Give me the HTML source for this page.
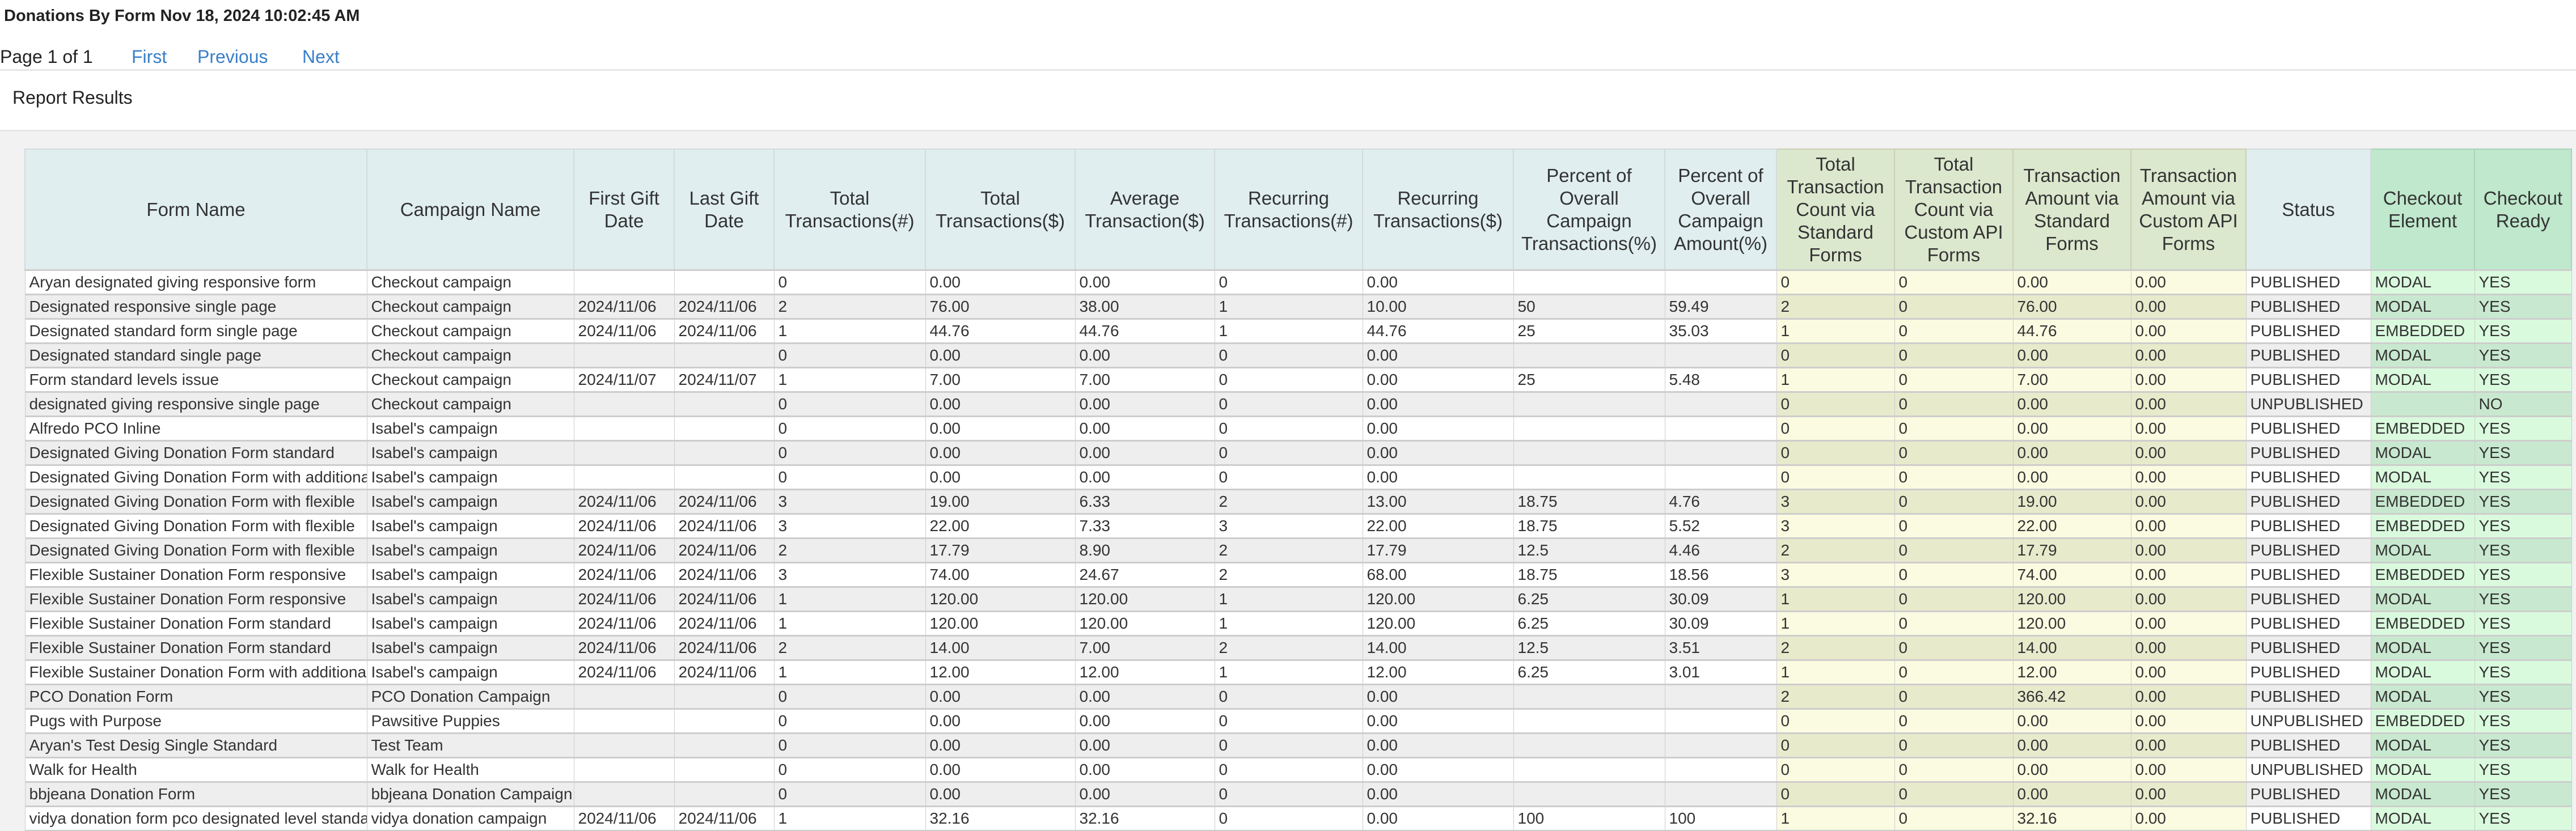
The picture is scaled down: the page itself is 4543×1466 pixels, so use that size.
<!DOCTYPE html>
<html><head><meta charset="utf-8">
<style>
html,body{margin:0;padding:0;background:#fff;width:4543px;height:1466px;overflow:hidden;font-family:"Liberation Sans",sans-serif;color:#222}
.title{position:absolute;left:7px;top:12px;font-size:29px;font-weight:bold}
.pager{position:absolute;left:0;top:82px;font-size:32px}
.pager a{color:#3a7fc8;text-decoration:none;position:absolute;top:0;white-space:nowrap}
.line{position:absolute;left:0;right:0;top:122px;height:3px;background:#e6e6e6}
.rr{position:absolute;left:22px;top:154px;font-size:32px}
.band{position:absolute;left:0;right:0;top:229px;bottom:0;background:#f2f2f2;border-top:3px solid #e6e6e6}
table{position:absolute;left:43px;top:262px;border-collapse:collapse;table-layout:fixed;width:4491px}
th,td{border:2px solid #cfcfcf;overflow:hidden;white-space:nowrap}
th{height:211px;font-weight:normal;font-size:33px;line-height:40px;white-space:normal;background:#e0eef0;color:#333;padding:0 2px;border-color:#d2dadb}
td{height:40px;font-size:28px;padding:0 0 0 7px;color:#333;background:#fff;border-left-width:1px;border-right-width:1px;border-top-width:3px;border-color:#cdcdcd}
tr.g td{background:#eeeeee}
th.y{background:#dce8ce;border-color:#c9cfb5}
th.e{background:#bfe8cc;border-color:#aad2b8}
td.y{background:#fafbe0}
tr.g td.y{background:#e8eacc}
td.e{background:#dafade}
tr.g td.e{background:#c8e9cf}
</style></head><body>
<div class="title">Donations By Form Nov 18, 2024 10:02:45 AM</div>
<div class="pager"><span>Page 1 of 1</span><a style="left:232px">First</a><a style="left:348px">Previous</a><a style="left:533px">Next</a></div>
<div class="line"></div>
<div class="rr">Report Results</div>
<div class="band"></div>
<table>
<colgroup>
<col style="width:603px"><col style="width:365px"><col style="width:177px"><col style="width:176px"><col style="width:267px"><col style="width:264px"><col style="width:246px"><col style="width:261px"><col style="width:266px"><col style="width:267px"><col style="width:197px"><col style="width:208px"><col style="width:209px"><col style="width:208px"><col style="width:203px"><col style="width:220px"><col style="width:183px"><col style="width:171px">
</colgroup>
<tr><th>Form Name</th><th>Campaign Name</th><th>First Gift Date</th><th>Last Gift Date</th><th>Total Transactions(#)</th><th>Total Transactions($)</th><th>Average Transaction($)</th><th>Recurring Transactions(#)</th><th>Recurring Transactions($)</th><th>Percent of Overall Campaign Transactions(%)</th><th>Percent of Overall Campaign Amount(%)</th><th class="y">Total Transaction Count via Standard Forms</th><th class="y">Total Transaction Count via Custom API Forms</th><th class="y">Transaction Amount via Standard Forms</th><th class="y">Transaction Amount via Custom API Forms</th><th>Status</th><th class="e">Checkout Element</th><th class="e">Checkout Ready</th></tr>
<tr><td>Aryan designated giving responsive form</td><td>Checkout campaign</td><td></td><td></td><td>0</td><td>0.00</td><td>0.00</td><td>0</td><td>0.00</td><td></td><td></td><td class="y">0</td><td class="y">0</td><td class="y">0.00</td><td class="y">0.00</td><td>PUBLISHED</td><td class="e">MODAL</td><td class="e">YES</td></tr>
<tr class="g"><td>Designated responsive single page</td><td>Checkout campaign</td><td>2024/11/06</td><td>2024/11/06</td><td>2</td><td>76.00</td><td>38.00</td><td>1</td><td>10.00</td><td>50</td><td>59.49</td><td class="y">2</td><td class="y">0</td><td class="y">76.00</td><td class="y">0.00</td><td>PUBLISHED</td><td class="e">MODAL</td><td class="e">YES</td></tr>
<tr><td>Designated standard form single page</td><td>Checkout campaign</td><td>2024/11/06</td><td>2024/11/06</td><td>1</td><td>44.76</td><td>44.76</td><td>1</td><td>44.76</td><td>25</td><td>35.03</td><td class="y">1</td><td class="y">0</td><td class="y">44.76</td><td class="y">0.00</td><td>PUBLISHED</td><td class="e">EMBEDDED</td><td class="e">YES</td></tr>
<tr class="g"><td>Designated standard single page</td><td>Checkout campaign</td><td></td><td></td><td>0</td><td>0.00</td><td>0.00</td><td>0</td><td>0.00</td><td></td><td></td><td class="y">0</td><td class="y">0</td><td class="y">0.00</td><td class="y">0.00</td><td>PUBLISHED</td><td class="e">MODAL</td><td class="e">YES</td></tr>
<tr><td>Form standard levels issue</td><td>Checkout campaign</td><td>2024/11/07</td><td>2024/11/07</td><td>1</td><td>7.00</td><td>7.00</td><td>0</td><td>0.00</td><td>25</td><td>5.48</td><td class="y">1</td><td class="y">0</td><td class="y">7.00</td><td class="y">0.00</td><td>PUBLISHED</td><td class="e">MODAL</td><td class="e">YES</td></tr>
<tr class="g"><td>designated giving responsive single page</td><td>Checkout campaign</td><td></td><td></td><td>0</td><td>0.00</td><td>0.00</td><td>0</td><td>0.00</td><td></td><td></td><td class="y">0</td><td class="y">0</td><td class="y">0.00</td><td class="y">0.00</td><td>UNPUBLISHED</td><td class="e"></td><td class="e">NO</td></tr>
<tr><td>Alfredo PCO Inline</td><td>Isabel's campaign</td><td></td><td></td><td>0</td><td>0.00</td><td>0.00</td><td>0</td><td>0.00</td><td></td><td></td><td class="y">0</td><td class="y">0</td><td class="y">0.00</td><td class="y">0.00</td><td>PUBLISHED</td><td class="e">EMBEDDED</td><td class="e">YES</td></tr>
<tr class="g"><td>Designated Giving Donation Form standard</td><td>Isabel's campaign</td><td></td><td></td><td>0</td><td>0.00</td><td>0.00</td><td>0</td><td>0.00</td><td></td><td></td><td class="y">0</td><td class="y">0</td><td class="y">0.00</td><td class="y">0.00</td><td>PUBLISHED</td><td class="e">MODAL</td><td class="e">YES</td></tr>
<tr><td>Designated Giving Donation Form with additional</td><td>Isabel's campaign</td><td></td><td></td><td>0</td><td>0.00</td><td>0.00</td><td>0</td><td>0.00</td><td></td><td></td><td class="y">0</td><td class="y">0</td><td class="y">0.00</td><td class="y">0.00</td><td>PUBLISHED</td><td class="e">MODAL</td><td class="e">YES</td></tr>
<tr class="g"><td>Designated Giving Donation Form with flexible</td><td>Isabel's campaign</td><td>2024/11/06</td><td>2024/11/06</td><td>3</td><td>19.00</td><td>6.33</td><td>2</td><td>13.00</td><td>18.75</td><td>4.76</td><td class="y">3</td><td class="y">0</td><td class="y">19.00</td><td class="y">0.00</td><td>PUBLISHED</td><td class="e">EMBEDDED</td><td class="e">YES</td></tr>
<tr><td>Designated Giving Donation Form with flexible</td><td>Isabel's campaign</td><td>2024/11/06</td><td>2024/11/06</td><td>3</td><td>22.00</td><td>7.33</td><td>3</td><td>22.00</td><td>18.75</td><td>5.52</td><td class="y">3</td><td class="y">0</td><td class="y">22.00</td><td class="y">0.00</td><td>PUBLISHED</td><td class="e">EMBEDDED</td><td class="e">YES</td></tr>
<tr class="g"><td>Designated Giving Donation Form with flexible</td><td>Isabel's campaign</td><td>2024/11/06</td><td>2024/11/06</td><td>2</td><td>17.79</td><td>8.90</td><td>2</td><td>17.79</td><td>12.5</td><td>4.46</td><td class="y">2</td><td class="y">0</td><td class="y">17.79</td><td class="y">0.00</td><td>PUBLISHED</td><td class="e">MODAL</td><td class="e">YES</td></tr>
<tr><td>Flexible Sustainer Donation Form responsive</td><td>Isabel's campaign</td><td>2024/11/06</td><td>2024/11/06</td><td>3</td><td>74.00</td><td>24.67</td><td>2</td><td>68.00</td><td>18.75</td><td>18.56</td><td class="y">3</td><td class="y">0</td><td class="y">74.00</td><td class="y">0.00</td><td>PUBLISHED</td><td class="e">EMBEDDED</td><td class="e">YES</td></tr>
<tr class="g"><td>Flexible Sustainer Donation Form responsive</td><td>Isabel's campaign</td><td>2024/11/06</td><td>2024/11/06</td><td>1</td><td>120.00</td><td>120.00</td><td>1</td><td>120.00</td><td>6.25</td><td>30.09</td><td class="y">1</td><td class="y">0</td><td class="y">120.00</td><td class="y">0.00</td><td>PUBLISHED</td><td class="e">MODAL</td><td class="e">YES</td></tr>
<tr><td>Flexible Sustainer Donation Form standard</td><td>Isabel's campaign</td><td>2024/11/06</td><td>2024/11/06</td><td>1</td><td>120.00</td><td>120.00</td><td>1</td><td>120.00</td><td>6.25</td><td>30.09</td><td class="y">1</td><td class="y">0</td><td class="y">120.00</td><td class="y">0.00</td><td>PUBLISHED</td><td class="e">EMBEDDED</td><td class="e">YES</td></tr>
<tr class="g"><td>Flexible Sustainer Donation Form standard</td><td>Isabel's campaign</td><td>2024/11/06</td><td>2024/11/06</td><td>2</td><td>14.00</td><td>7.00</td><td>2</td><td>14.00</td><td>12.5</td><td>3.51</td><td class="y">2</td><td class="y">0</td><td class="y">14.00</td><td class="y">0.00</td><td>PUBLISHED</td><td class="e">MODAL</td><td class="e">YES</td></tr>
<tr><td>Flexible Sustainer Donation Form with additional</td><td>Isabel's campaign</td><td>2024/11/06</td><td>2024/11/06</td><td>1</td><td>12.00</td><td>12.00</td><td>1</td><td>12.00</td><td>6.25</td><td>3.01</td><td class="y">1</td><td class="y">0</td><td class="y">12.00</td><td class="y">0.00</td><td>PUBLISHED</td><td class="e">MODAL</td><td class="e">YES</td></tr>
<tr class="g"><td>PCO Donation Form</td><td>PCO Donation Campaign</td><td></td><td></td><td>0</td><td>0.00</td><td>0.00</td><td>0</td><td>0.00</td><td></td><td></td><td class="y">2</td><td class="y">0</td><td class="y">366.42</td><td class="y">0.00</td><td>PUBLISHED</td><td class="e">MODAL</td><td class="e">YES</td></tr>
<tr><td>Pugs with Purpose</td><td>Pawsitive Puppies</td><td></td><td></td><td>0</td><td>0.00</td><td>0.00</td><td>0</td><td>0.00</td><td></td><td></td><td class="y">0</td><td class="y">0</td><td class="y">0.00</td><td class="y">0.00</td><td>UNPUBLISHED</td><td class="e">EMBEDDED</td><td class="e">YES</td></tr>
<tr class="g"><td>Aryan's Test Desig Single Standard</td><td>Test Team</td><td></td><td></td><td>0</td><td>0.00</td><td>0.00</td><td>0</td><td>0.00</td><td></td><td></td><td class="y">0</td><td class="y">0</td><td class="y">0.00</td><td class="y">0.00</td><td>PUBLISHED</td><td class="e">MODAL</td><td class="e">YES</td></tr>
<tr><td>Walk for Health</td><td>Walk for Health</td><td></td><td></td><td>0</td><td>0.00</td><td>0.00</td><td>0</td><td>0.00</td><td></td><td></td><td class="y">0</td><td class="y">0</td><td class="y">0.00</td><td class="y">0.00</td><td>UNPUBLISHED</td><td class="e">MODAL</td><td class="e">YES</td></tr>
<tr class="g"><td>bbjeana Donation Form</td><td>bbjeana Donation Campaign</td><td></td><td></td><td>0</td><td>0.00</td><td>0.00</td><td>0</td><td>0.00</td><td></td><td></td><td class="y">0</td><td class="y">0</td><td class="y">0.00</td><td class="y">0.00</td><td>PUBLISHED</td><td class="e">MODAL</td><td class="e">YES</td></tr>
<tr><td>vidya donation form pco designated level standard</td><td>vidya donation campaign</td><td>2024/11/06</td><td>2024/11/06</td><td>1</td><td>32.16</td><td>32.16</td><td>0</td><td>0.00</td><td>100</td><td>100</td><td class="y">1</td><td class="y">0</td><td class="y">32.16</td><td class="y">0.00</td><td>PUBLISHED</td><td class="e">MODAL</td><td class="e">YES</td></tr>
</table>
</body></html>
